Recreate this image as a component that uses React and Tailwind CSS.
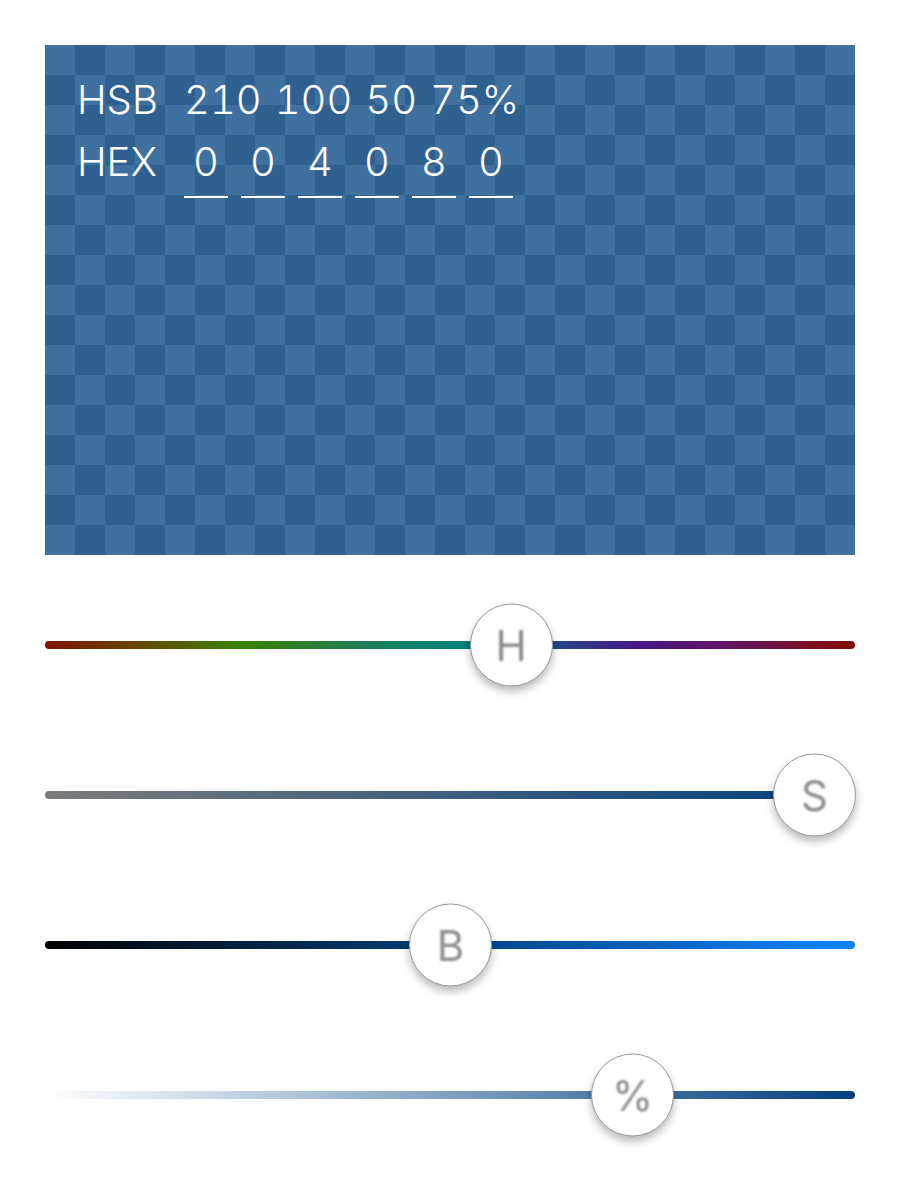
import { useState } from "react";

const hex = ["0", "0", "4", "0", "8", "0"];

const sliders = [
  {
    key: "H",
    label: "H",
    value: 210 / 360,
    track:
      "bg-[linear-gradient(to_right,#821200_0%,#5e5200_14%,#3c8200_24%,#1e8058_40%,#008080_52%,#24478a_63%,#46188a_73%,#681454_87%,#840c00_100%)]",
  },
  {
    key: "S",
    label: "S",
    value: 1,
    track: "bg-[linear-gradient(to_right,#7c7c7c,#004080)]",
  },
  {
    key: "B",
    label: "B",
    value: 0.5,
    track: "bg-[linear-gradient(to_right,#000000,#0a84ff)]",
  },
  {
    key: "A",
    label: "%",
    value: 0.75,
    track: "bg-[linear-gradient(to_right,rgba(0,64,128,0),#004080)]",
  },
];

const THUMB = 82;
const TRACK_W = 810;

const Slider = ({ label, value, track }) => {
  const left = value * (TRACK_W - THUMB);
  return (
    <div className="h-[150px] flex items-center">
      <div className="relative w-full h-[8px]">
        <div className={`w-full h-full rounded-full ${track}`} />
        <div
          className="absolute top-1/2 -translate-y-1/2 w-[83px] h-[83px] rounded-full bg-white border border-[#999999] shadow-[0_5px_8px_rgba(0,0,0,0.28)] flex items-center justify-center"
          style={{ left }}
        >
          <span className="text-[42px] leading-none font-normal text-[#8c8c8c] blur-[0.8px]">
            {label}
          </span>
        </div>
      </div>
    </div>
  );
};

export default function App() {
  const [vals] = useState(["210", "100", "50", "75%"]);

  return (
    <div className="w-[900px] h-[1200px] bg-white px-[45px] pt-[45px] font-['Inter','Noto_Sans',sans-serif]">
      <div className="h-[510px] bg-[image:repeating-conic-gradient(#306090_0_25%,#4070a0_0_50%)] bg-[length:60px_60px] pt-[38px] pl-[32px] text-white font-light">
        <div className="flex items-end h-[37px]">
          <div className="w-[107px] text-[40px] leading-none">HSB</div>
          <div className="flex gap-[13px] text-[40px] leading-none tabular-nums">
            {vals.map((v) => (
              <span key={v}>{v}</span>
            ))}
          </div>
        </div>
        <div className="flex items-start mt-[22px]">
          <div className="w-[107px] text-[40px] leading-none">HEX</div>
          <div className="flex gap-[13px]">
            {hex.map((h, i) => (
              <div
                key={i}
                className="w-[44px] h-[56px] border-b-[2px] border-white text-center text-[40px] leading-none tabular-nums"
              >
                {h}
              </div>
            ))}
          </div>
        </div>
      </div>
      <div className="pt-[15px]">
        {sliders.map((s) => (
          <Slider key={s.key} {...s} />
        ))}
      </div>
    </div>
  );
}
